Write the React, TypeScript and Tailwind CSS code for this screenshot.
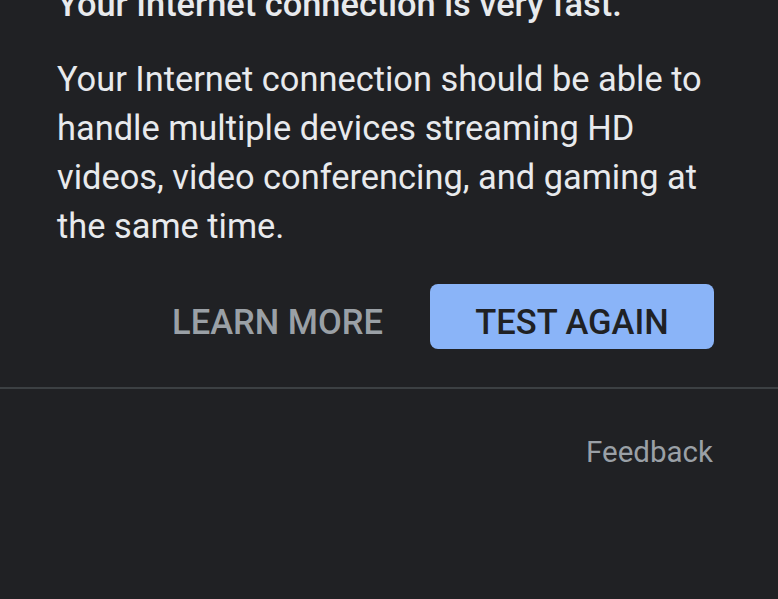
export default function App() {
	return (
		<div className="flex h-[599px] w-[778px] flex-col overflow-hidden bg-[#202124] font-['Roboto',sans-serif]">
			<div className="mt-[-20px] pl-[57px] pr-[58px]">
				<div className="text-[34.4px] font-medium leading-[48px] text-[#e8eaed]">Your Internet connection is very fast.</div>
				<p className="mt-[27px] text-[34.4px] leading-[49px] text-[#e8eaed]">
					Your Internet connection should be able to handle multiple devices streaming HD videos, video conferencing, and gaming at
					the same time.
				</p>
			</div>
			<div className="mt-[33px] flex items-center justify-end gap-[47px] pr-[64px]">
				<button className="h-[65px] pt-[12px] text-[34.5px] font-medium text-[#9aa0a6]">LEARN MORE</button>
				<button className="flex h-[65px] w-[284px] items-center justify-center rounded-[8px] bg-[#8ab4f8] pt-[12px] text-[34.5px] font-medium text-[#202124]">
					TEST AGAIN
				</button>
			</div>
			<div className="mt-[38px] h-[2px] w-full bg-[#3c4043]" />
			<div className="mt-[41px] flex justify-end pr-[65px]">
				<button className="text-[29.5px] text-[#9aa0a6]">Feedback</button>
			</div>
		</div>
	);
}
